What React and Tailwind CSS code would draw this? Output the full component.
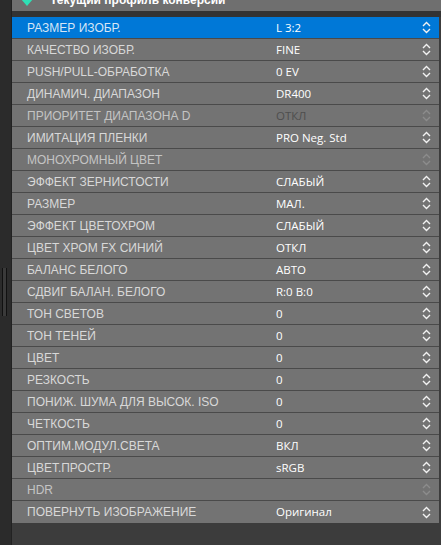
import { } from 'react';

const rows = [
  { label: 'РАЗМЕР ИЗОБР.', value: 'L 3:2', active: true },
  { label: 'КАЧЕСТВО ИЗОБР.', value: 'FINE' },
  { label: 'PUSH/PULL-ОБРАБОТКА', value: '0 EV' },
  { label: 'ДИНАМИЧ. ДИАПАЗОН', value: 'DR400' },
  { label: 'ПРИОРИТЕТ ДИАПАЗОНА D', value: 'ОТКЛ', disabled: true },
  { label: 'ИМИТАЦИЯ ПЛЕНКИ', value: 'PRO Neg. Std' },
  { label: 'МОНОХРОМНЫЙ ЦВЕТ', value: '', disabled: true },
  { label: 'ЭФФЕКТ ЗЕРНИСТОСТИ', value: 'СЛАБЫЙ' },
  { label: 'РАЗМЕР', value: 'МАЛ.' },
  { label: 'ЭФФЕКТ ЦВЕТОХРОМ', value: 'СЛАБЫЙ' },
  { label: 'ЦВЕТ ХРОМ FX СИНИЙ', value: 'ОТКЛ' },
  { label: 'БАЛАНС БЕЛОГО', value: 'АВТО' },
  { label: 'СДВИГ БАЛАН. БЕЛОГО', value: 'R:0 B:0' },
  { label: 'ТОН СВЕТОВ', value: '0' },
  { label: 'ТОН ТЕНЕЙ', value: '0' },
  { label: 'ЦВЕТ', value: '0' },
  { label: 'РЕЗКОСТЬ', value: '0' },
  { label: 'ПОНИЖ. ШУМА ДЛЯ ВЫСОК. ISO', value: '0' },
  { label: 'ЧЕТКОСТЬ', value: '0' },
  { label: 'ОПТИМ.МОДУЛ.СВЕТА', value: 'ВКЛ' },
  { label: 'ЦВЕТ.ПРОСТР.', value: 'sRGB' },
  { label: 'HDR', value: '', disabled: true },
  { label: 'ПОВЕРНУТЬ ИЗОБРАЖЕНИЕ', value: 'Оригинал' },
];

const Chevrons = ({ color }) => (
  <svg width="9" height="13" viewBox="0 0 9 13" fill="none" stroke={color} strokeWidth="1.4">
    <path d="M1 5 L4.5 1.5 L8 5" />
    <path d="M1 8 L4.5 11.5 L8 8" />
  </svg>
);

const Row = ({ label, value, active, disabled, last }) => (
  <div
    className={`flex h-[22px] items-center ${last ? '' : 'border-b border-[#4a4a4a]'} ${
      active ? 'bg-[#0078d7]' : 'bg-[#737373]'
    }`}
  >
    <span
      className={`w-[264px] pl-[15px] text-[12px] font-['Liberation_Sans',Arial,sans-serif] ${
        active ? 'text-[#d6e6f6]' : disabled ? 'text-[#c4c4c4]' : 'text-[#d8d8d8]'
      }`}
    >
      {label}
    </span>
    <span
      className={`flex-1 text-[11.5px] font-medium font-['Open_Sans',sans-serif] ${
        disabled ? 'text-[#4e4e4e]' : 'text-white'
      }`}
    >
      {value}
    </span>
    <span className="mr-[8px] flex items-center">
      <Chevrons color={disabled ? '#8c8c8c' : '#f2f2f2'} />
    </span>
  </div>
);

const App = () => {
  return (
    <div className="flex h-[545px] w-[441px] overflow-hidden bg-[#3c3c3c]">
      <div className="flex w-[12px] shrink-0 flex-col border-r border-[#222] bg-[#2b2b2b]">
        <div className="mt-[268px] ml-[2px] flex h-[48px] w-[5px] justify-between border-x border-[#111] bg-[#3a3a3a]" />
      </div>
      <div className="flex flex-1 flex-col">
        <div className="flex h-[11px] items-end overflow-hidden bg-[#6f6f6f] pr-[2px]">
          <div className="mb-[3px] flex h-[16px] shrink-0 items-center gap-[16px] pl-[8px] leading-[16px]">
            <svg width="14" height="16" viewBox="0 0 14 16">
              <path d="M1 7 L13 7 L7 14 Z" fill="#2ee0b5" />
            </svg>
            <span className="text-[12px] font-bold text-white font-['Liberation_Sans',Arial,sans-serif]">
              Текущий профиль конверсии
            </span>
          </div>
        </div>
        <div className="h-[6px] bg-[#333333]" />
        <div className="mr-[2px] flex flex-col">
          {rows.map((r, i) => (
            <Row key={i} {...r} last={i === rows.length - 1} />
          ))}
        </div>
      </div>
    </div>
  );
};

export default App;
